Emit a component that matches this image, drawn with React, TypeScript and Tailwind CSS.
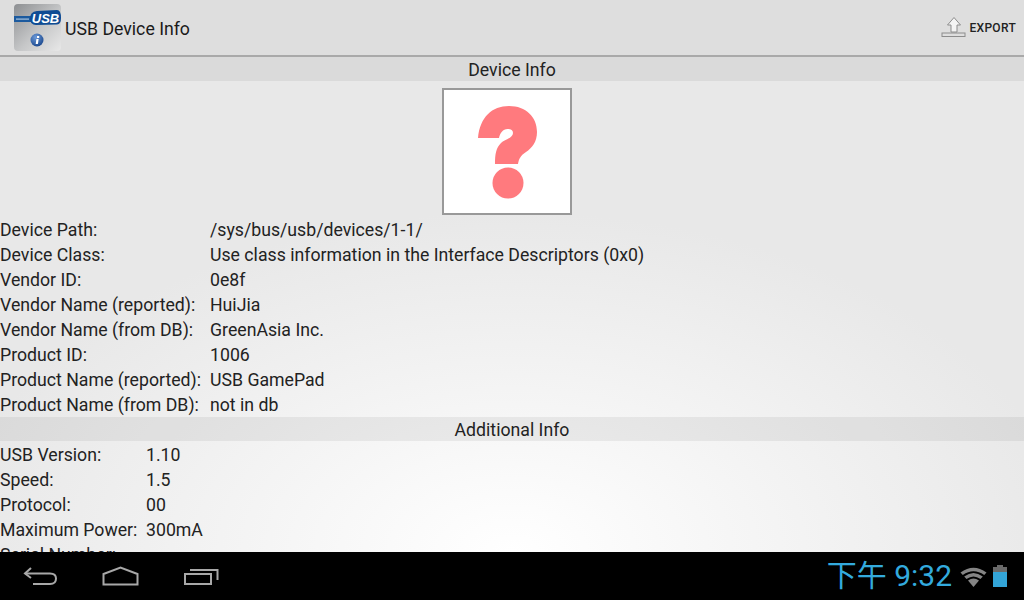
import React from 'react';

const deviceRows = [
    ['Device Path:', '/sys/bus/usb/devices/1-1/'],
    ['Device Class:', 'Use class information in the Interface Descriptors (0x0)'],
    ['Vendor ID:', '0e8f'],
    ['Vendor Name (reported):', 'HuiJia'],
    ['Vendor Name (from DB):', 'GreenAsia Inc.'],
    ['Product ID:', '1006'],
    ['Product Name (reported):', 'USB GamePad'],
    ['Product Name (from DB):', 'not in db'],
];

const extraRows = [
    ['USB Version:', '1.10'],
    ['Speed:', '1.5'],
    ['Protocol:', '00'],
    ['Maximum Power:', '300mA'],
    ['Serial Number:', ''],
];

const AppIcon = () => (
    <svg width="47" height="47" viewBox="0 0 47 47" className="rounded-[4px]">
        <defs>
            <linearGradient id="tile" x1="0" y1="0" x2="1" y2="1">
                <stop offset="0" stopColor="#8d8f92" />
                <stop offset="0.55" stopColor="#c6c7c8" />
                <stop offset="1" stopColor="#e8e8e8" />
            </linearGradient>
            <radialGradient id="ball" cx="0.4" cy="0.3" r="0.8">
                <stop offset="0" stopColor="#6d9ad8" />
                <stop offset="1" stopColor="#123f86" />
            </radialGradient>
        </defs>
        <rect width="47" height="47" fill="url(#tile)" />
        <rect x="0" y="12" width="20" height="6" fill="#1c5a9e" />
        <rect x="2" y="14.5" width="13" height="1.2" fill="#a9c2dc" />
        <path d="M23 7 Q16 7.5 16 14.5 Q16 21 22 21 L43 20.5 Q47 20.5 47 14 Q47 6 43 6 Z" fill="#0f4c94" />
        <text x="31.5" y="18.5" textAnchor="middle" fontFamily="'Liberation Sans', sans-serif" fontWeight="700" fontStyle="italic" fontSize="13" fill="#ffffff">USB</text>
        <circle cx="23" cy="36" r="6.5" fill="url(#ball)" />
        <path d="M22.4 35 H24.6 L23.9 40 H21.7 Z" fill="#ffffff" />
        <rect x="23" y="32" width="2.2" height="2" fill="#ffffff" />
    </svg>
);

const ExportIcon = () => (
    <svg width="26" height="24" viewBox="0 0 26 24" fill="none">
        <path d="M13 1.5 L19.5 9 H16 V16 H10 V9 H6.5 Z" fill="#f4f4f4" stroke="#8c8c8c" strokeWidth="1" />
        <rect x="1" y="17" width="23" height="3.5" fill="#dedede" stroke="#8c8c8c" strokeWidth="1" />
    </svg>
);

const QuestionMark = () => (
    <svg width="64" height="96" viewBox="0 0 64 96">
        <path d="M2 34 C4 13 16 2 33 2 C50 2 61 13 61 28 C61 38 56 44 50 48 C44 52 43 55 42 60 H19 C19 50 20 44 25 39 C28 36 37 34 37 29 C37 26 35 25 31.5 25 C27 25 24 29 23 34 Z" fill="#ff7a7e" />
        <circle cx="32" cy="79" r="15.5" fill="#ff7a7e" />
    </svg>
);

const SectionHeader = ({ title }: { title: string }) => (
    <div className="h-6 leading-[26px] text-center bg-black/[0.06] text-[#222222]">{title}</div>
);

export default function App() {
    return (
        <div className="w-[1024px] h-[600px] flex flex-col overflow-hidden font-['Roboto',sans-serif] text-[17.7px] text-[#222222]">
            <header className="h-[57px] shrink-0 flex items-center justify-between bg-[#dedede] border-b-2 border-[#a9a9a9] pl-[14px] pr-2">
                <div className="flex items-center gap-1">
                    <AppIcon />
                    <span className="text-[17.7px] leading-[28px] pt-[2px] text-[#1a1a1a]">USB Device Info</span>
                </div>
                <button className="flex items-center gap-[2px] text-xs font-medium tracking-[0.3px]">
                    <ExportIcon />
                    EXPORT
                </button>
            </header>

            <main className="flex-1 min-h-0 overflow-hidden bg-[radial-gradient(ellipse_560px_340px_at_512px_495px,#ffffff_0%,#e8e8e8_100%)]">
                <SectionHeader title="Device Info" />
                <div className="flex justify-center pt-[7px] pr-[10px] h-[136px]">
                    <div className="w-[130px] h-[127px] flex items-center justify-center bg-white border-2 border-[#999999] pl-[2px]">
                        <QuestionMark />
                    </div>
                </div>
                <div className="grid grid-cols-[210px_1fr] pt-px -mb-px">
                    {deviceRows.map(([label, value]) => (
                        <React.Fragment key={label}>
                            <div className="h-[25px] leading-[25px]">{label}</div>
                            <div className="h-[25px] leading-[25px]">{value}</div>
                        </React.Fragment>
                    ))}
                </div>
                <SectionHeader title="Additional Info" />
                <div className="grid grid-cols-[146px_1fr] pt-[2px]">
                    {extraRows.map(([label, value]) => (
                        <React.Fragment key={label}>
                            <div className="h-[25px] leading-[25px]">{label}</div>
                            <div className="h-[25px] leading-[25px]">{value}</div>
                        </React.Fragment>
                    ))}
                </div>
            </main>

            <footer className="h-12 shrink-0 bg-black flex items-center justify-between pl-[23px] pr-[17px]">
                <div className="flex items-center gap-[45px]">
                    <svg width="34" height="20" viewBox="0 0 34 20" fill="none" stroke="#a8a8a8" strokeWidth="2">
                        <path d="M8 2 L2 7.5 L8 12" />
                        <path d="M2 7.5 H27 Q33 7.5 33 12.5 Q33 18 27 18 H10" />
                    </svg>
                    <svg width="37" height="20" viewBox="0 0 37 20" fill="none" stroke="#a8a8a8" strokeWidth="2">
                        <path d="M1.5 18.5 V8 L18.5 1.5 L35.5 8 V18.5 Z" />
                    </svg>
                    <svg width="35" height="18" viewBox="0 0 35 18" fill="none" stroke="#a8a8a8" strokeWidth="2">
                        <rect x="1" y="7" width="26" height="10" />
                        <path d="M6 3 H33.5 V13" />
                    </svg>
                </div>
                <div className="flex items-center">
                    <span className="text-[30px] leading-none text-[#33aadd] font-['Roboto','Noto_Sans_CJK_TC',sans-serif]">下午 9:32</span>
                    <svg width="27" height="21" viewBox="0 0 27 21" className="ml-2">
                        <path d="M0.5 6.5 Q13.5 -3 26.5 6.5 L24.2 9 Q13.5 1.5 2.8 9 Z" fill="#858585" />
                        <path d="M4.2 10.5 Q13.5 3.5 22.8 10.5 L20.5 13 Q13.5 8 6.5 13 Z" fill="#858585" />
                        <path d="M8 14.5 Q13.5 10.5 19 14.5 L13.5 21 Z" fill="#858585" />
                    </svg>
                    <svg width="14" height="22" viewBox="0 0 14 22" className="ml-[6px]">
                        <rect x="4" y="0" width="6" height="3" fill="#6a6a6a" />
                        <rect x="0" y="2" width="14" height="5" fill="#6a6a6a" />
                        <rect x="0" y="7" width="14" height="15" fill="#33a5d8" />
                    </svg>
                </div>
            </footer>
        </div>
    );
}
